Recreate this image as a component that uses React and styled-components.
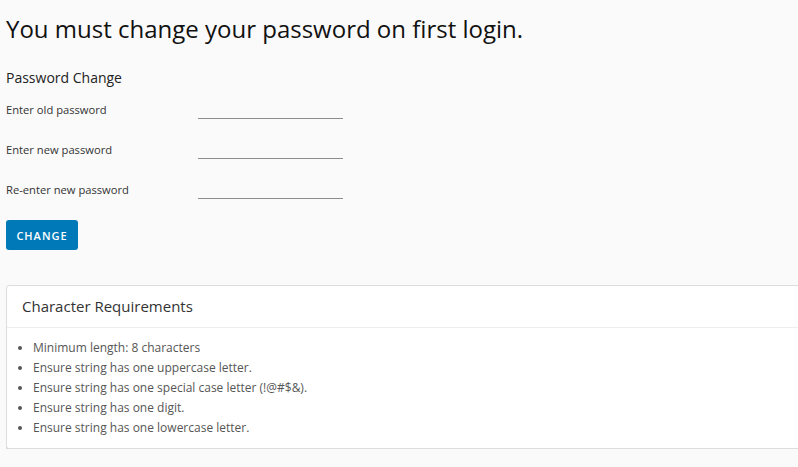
import { createGlobalStyle, styled } from 'styled-components';

const GlobalStyle = createGlobalStyle`
  html, body {
    margin: 0;
    padding: 0;
    background: #fafafa;
    font-family: 'Open Sans', 'Liberation Sans', sans-serif;
    color: #313131;
  }
`;

const requirements = [
  'Minimum length: 8 characters',
  'Ensure string has one uppercase letter.',
  'Ensure string has one special case letter (!@#$&).',
  'Ensure string has one digit.',
  'Ensure string has one lowercase letter.',
];

const fields = ['Enter old password', 'Enter new password', 'Re-enter new password'];

export default function App() {
  return (
    <>
      <GlobalStyle />
      <Page>
        <Title>You must change your password on first login.</Title>
        <Form>
          <FormTitle>Password Change</FormTitle>
          {fields.map((label) => (
            <Row key={label}>
              <Label>{label}</Label>
              <Input type='password' />
            </Row>
          ))}
          <Button type='button'>CHANGE</Button>
        </Form>
        <Card>
          <CardHeader>Character Requirements</CardHeader>
          <CardBlock>
            <List>
              {requirements.map((r) => (
                <Item key={r}>{r}</Item>
              ))}
            </List>
          </CardBlock>
        </Card>
      </Page>
    </>
  );
}

const Page = styled.div`
  padding: 12px 0 0 6px;
  width: 812px;
  overflow: hidden;
`;

const Title = styled.h1`
  margin: 0;
  font-size: 24px;
  font-weight: 400;
  line-height: 34px;
  color: #111;
`;

const Form = styled.form`
  display: flex;
  flex-direction: column;
  margin-top: 22px;
`;

const FormTitle = styled.h3`
  margin: 0 0 12px;
  font-size: 14px;
  font-weight: 400;
  line-height: 20px;
  color: #222;
`;

const Row = styled.div`
  display: flex;
  align-items: flex-start;
  height: 40px;
`;

const Label = styled.label`
  width: 192px;
  font-size: 11.2px;
  line-height: 20px;
  color: #333;
`;

const Input = styled.input`
  width: 145px;
  height: 18px;
  border: none;
  border-bottom: 1px solid #8c8c8c;
  background: transparent;
  padding: 0;
  outline: none;
`;

const Button = styled.button`
  align-self: flex-start;
  width: 72px;
  height: 30px;
  border: none;
  border-radius: 3px;
  background: #0079b8;
  color: #fff;
  font-family: inherit;
  font-size: 11px;
  font-weight: 600;
  letter-spacing: 1px;
  cursor: pointer;
`;

const Card = styled.div`
  margin-top: 35px;
  background: #fff;
  border: 1px solid #ddd;
  border-radius: 3px;
  box-shadow: 0 3px 0 #d7d7d7;
`;

const CardHeader = styled.div`
  padding: 9px 15px 10px;
  font-size: 15px;
  line-height: 22px;
  color: #333;
  border-bottom: 1px solid #eee;
`;

const CardBlock = styled.div`
  padding: 10px 15px 10px;
`;

const List = styled.ul`
  margin: 0;
  padding: 0 0 0 11px;
`;

const Item = styled.li`
  font-size: 12px;
  line-height: 20px;
  color: #565656;
`;
